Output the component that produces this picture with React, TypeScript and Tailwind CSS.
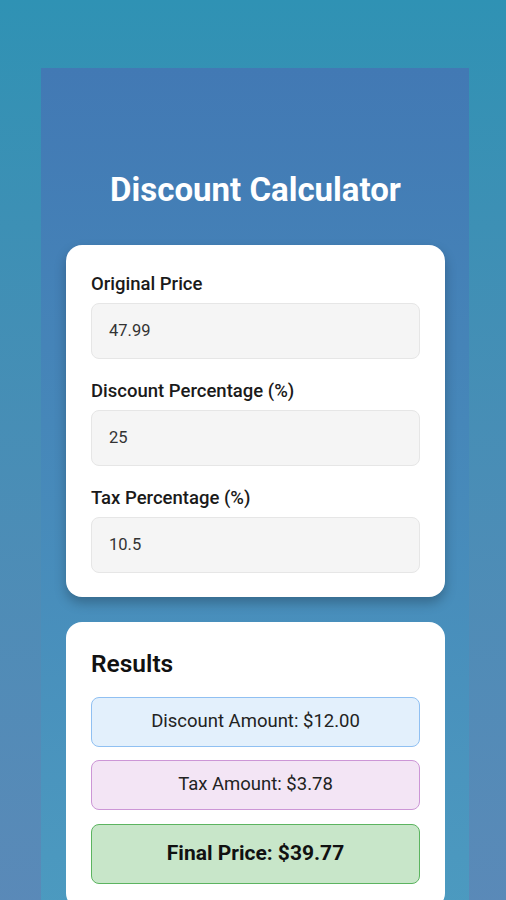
import React from "react";

const fields = [
  { label: "Original Price", value: "47.99" },
  { label: "Discount Percentage (%)", value: "25" },
  { label: "Tax Percentage (%)", value: "10.5" },
];

export default function App() {
  return (
    <div
      className="min-h-[900px] w-full bg-gradient-to-b from-[#2f92b4] to-[#5b89b8] pt-[68px] pl-[41px] pr-[37px] overflow-hidden"
      style={{ fontFamily: "Roboto, 'Noto Sans', sans-serif" }}
    >
      <div className="min-h-[832px] w-full bg-gradient-to-b from-[#4279b4] to-[#4c9bc0] pl-[25px] pr-[24px] pt-[101px] pb-6">
        <h1 className="text-center text-[33px] leading-[42px] font-bold text-white">
          Discount Calculator
        </h1>
        <div className="mt-[34px] rounded-2xl bg-white px-[25px] pt-[27px] pb-[24px] shadow-[0_6px_12px_rgba(0,0,0,0.25)]">
          {fields.map((f, i) => (
            <div key={f.label} className={i > 0 ? "mt-[20px]" : ""}>
              <div className="text-[18.5px] leading-[24px] font-medium text-[#1a1a1a]">{f.label}</div>
              <div className="mt-[7px] h-[56px] rounded-lg border border-[#e6e6e6] bg-[#f5f5f5] px-[17px] flex items-center text-[16.5px] text-[#333]">
                {f.value}
              </div>
            </div>
          ))}
        </div>
        <div className="mt-[25px] rounded-2xl bg-white px-[25px] pt-[27px] pb-[25px]">
          <div className="text-[24.5px] leading-[30px] font-semibold text-[#111]">Results</div>
          <div className="mt-[18px] h-[50px] rounded-lg border border-[#90c0f2] bg-[#e3f0fc] flex items-center justify-center text-[18.5px] text-[#222]">
            Discount Amount: $12.00
          </div>
          <div className="mt-[13px] h-[50px] rounded-lg border border-[#cc96d6] bg-[#f3e5f5] flex items-center justify-center text-[18.5px] text-[#222]">
            Tax Amount: $3.78
          </div>
          <div className="mt-[14px] h-[60px] rounded-lg border border-[#5cb460] bg-[#c8e6c9] flex items-center justify-center text-[21px] font-bold text-[#111]">
            Final Price: $39.77
          </div>
        </div>
      </div>
    </div>
  );
}
